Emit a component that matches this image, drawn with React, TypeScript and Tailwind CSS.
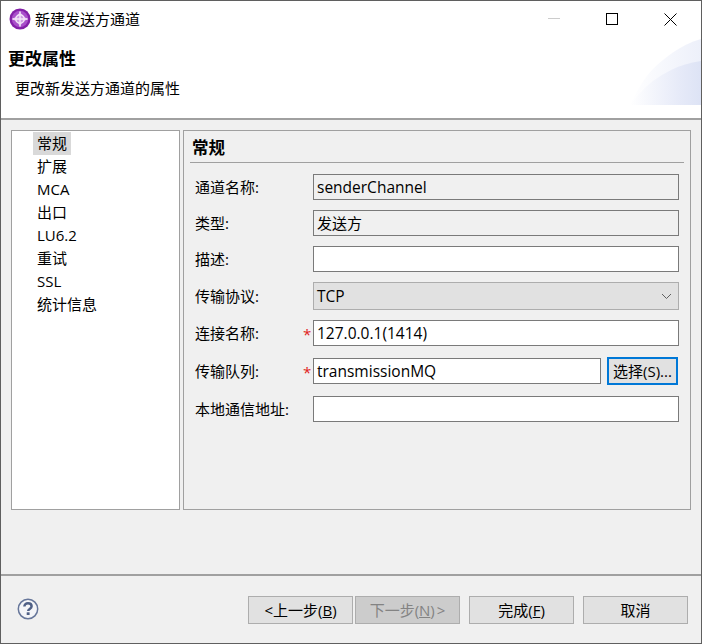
const FONT = "font-['Open_Sans','Noto_Sans_CJK_SC',sans-serif]";

function Field({ label, value, star, gray, latin, mt = "mt-[10px]", children }: { label: string; value?: string; star?: boolean; gray?: boolean; latin?: boolean; mt?: string; children?: React.ReactNode }) {
  return (
    <div className={`flex items-center ${mt}`}>
      <div className="w-[113px] pl-[5px] text-[15px] leading-[20px] flex-none">{label}</div>
      <div className="w-[10px] flex-none text-[#e02020] text-[15px] leading-[20px] pt-[2px]">{star ? "*" : ""}</div>
      {children ?? (
        <div className={`w-[366px] h-[26px] border border-[#7a7a7a] px-[3px] leading-[24px] ${latin ? "text-[15.5px]" : "text-[15px]"} ${gray ? "bg-[#f0f0f0]" : "bg-white"}`}>{value}</div>
      )}
    </div>
  );
}

function WizardButton({ children, disabled, className = "" }: { children: React.ReactNode; disabled?: boolean; className?: string }) {
  return (
    <div className={`w-[105px] h-[28px] flex items-center justify-center border border-[#adadad] text-[15px] leading-[20px] ${disabled ? "bg-[#cccccc] text-[#838383]" : "bg-[#e1e1e1] text-black"} ${className}`}>
      {children}
    </div>
  );
}

const NAV = ["常规", "扩展", "MCA", "出口", "LU6.2", "重试", "SSL", "统计信息"];

export default function App() {
  return (
    <div className={`w-[702px] h-[644px] flex flex-col border border-[#5f5f5f] bg-[#f0f0f0] text-black overflow-hidden ${FONT}`}>
      <div className="h-[117px] flex-none bg-white relative border-b-2 border-[#a0a0a0] box-content">
        <div className="flex items-center h-[36px] pl-[8px]">
          <svg width="22" height="22" viewBox="0 0 22 22" className="flex-none">
            <circle cx="11" cy="11" r="10.5" fill="#8420a8" />
            <circle cx="11" cy="11" r="8.2" fill="#a94fca" />
            <path d="M11 3C12.6 6.8 15.2 9.4 19 11C15.2 12.6 12.6 15.2 11 19C9.4 15.2 6.8 12.6 3 11C6.8 9.4 9.4 6.8 11 3Z" fill="#cf9de3" />
            <path d="M11 3.5v15M3.5 11h15" stroke="#f3e6f8" strokeWidth="1.4" />
            <circle cx="11" cy="11" r="4.2" fill="none" stroke="#f3e6f8" strokeWidth="1.4" />
          </svg>
          <span className="ml-[4px] text-[15px] leading-[20px]">新建发送方通道</span>
        </div>
        <svg width="12" height="1" className="absolute left-[547px] top-[17px]"><rect width="12" height="1" fill="#cccccc" /></svg>
        <svg width="12" height="12" className="absolute left-[605px] top-[12px]"><rect x="0.5" y="0.5" width="11" height="11" fill="none" stroke="#000" /></svg>
        <svg width="13" height="13" className="absolute left-[663px] top-[12px]"><path d="M0.5 0.5L12.5 12.5M12.5 0.5L0.5 12.5" stroke="#000" /></svg>
        <svg width="71" height="68" viewBox="0 0 71 68" className="absolute right-0 top-[36px]">
          <defs>
            <linearGradient id="a" x1="0" x2="1"><stop offset="0" stopColor="#ffffff" /><stop offset="1" stopColor="#edf0fa" /></linearGradient>
            <linearGradient id="b" x1="0" x2="1"><stop offset="0" stopColor="#ffffff" /><stop offset="0.7" stopColor="#e6eaf8" /><stop offset="1" stopColor="#dde3f5" /></linearGradient>
          </defs>
          <path d="M0 68C8 52 14 41 23 32C33 22 50 8 71 2V68Z" fill="url(#a)" />
          <path d="M0 68C8 58 14 51 23 44C33 37 48 27 71 24V68Z" fill="url(#b)" />
        </svg>
        <div className="pl-[7px] mt-[10px] text-[17px] leading-[24px] font-bold">更改属性</div>
        <div className="pl-[14px] mt-[7px] text-[15px] leading-[20px]">更改新发送方通道的属性</div>
      </div>

      <div className="flex h-[380px] flex-none mt-[10px] pl-[10px]">
        <div className="w-[169px] flex-none border border-[#a0a0a0] bg-white pt-[1px] pl-[21px]">
          {NAV.map((n, i) => (
            <div key={n} className="h-[23px] text-[15px] leading-[23px] flex">
              <span className={`px-[4px] ${i === 0 ? "bg-[#d9d9d9] w-[38px]" : ""}`}>{n}</span>
            </div>
          ))}
        </div>
        <div className="w-[508px] flex-none ml-[3px] border border-[#a0a0a0] px-[6px]">
          <div className="h-[32px] border-b border-[#a0a0a0] pl-[2px] text-[16.5px] leading-[33px] font-bold">常规</div>
          <Field label="通道名称:" value="senderChannel" gray latin mt="mt-[11px]" />
          <Field label="类型:" value="发送方" gray />
          <Field label="描述:" value="" />
          <Field label="传输协议:">
            <div className="w-[366px] h-[28px] border border-[#adadad] bg-[#e1e1e1] px-[3px] flex items-center justify-between text-[15.5px]">
              <span className="pt-[1px]">TCP</span>
              <svg width="11" height="7" viewBox="0 0 11 7" className="mr-[3px]"><path d="M1 1l4.5 4.5L10 1" fill="none" stroke="#606060" /></svg>
            </div>
          </Field>
          <Field label="连接名称:" value="127.0.0.1(1414)" star latin />
          <Field label="传输队列:" star mt="mt-[11px]">
            <div className="flex items-center">
              <div className="w-[288px] h-[26px] bg-white border border-[#7a7a7a] px-[3px] text-[15.5px] leading-[24px]">transmissionMQ</div>
              <div className="ml-[6px] w-[71px] h-[28px] border-2 border-[#0078d7] bg-[#e1e1e1] flex items-center justify-center text-[15px] whitespace-nowrap">选择(S)...</div>
            </div>
          </Field>
          <Field label="本地通信地址:" value="" mt="mt-[11px]" />
        </div>
      </div>

      <div className="mt-[64px] h-[68px] flex-none border-t-2 border-[#a0a0a0] flex items-start pt-[20px] pl-[16px] pr-[13px]">
        <svg width="22" height="22" viewBox="0 0 22 22" className="flex-none mt-[2px]">
          <circle cx="11" cy="11" r="9.7" fill="#f4f5f8" stroke="#66769a" strokeWidth="1.5" />
          <path d="M7.4 8.6C7.4 6.4 9 5.2 11 5.2s3.6 1.2 3.6 3.1c0 2.6-3.4 2.6-3.4 4.6" fill="none" stroke="#4f6086" strokeWidth="2.5" />
          <rect x="9.7" y="14.3" width="2.9" height="2.7" fill="#4f6086" />
        </svg>
        <div className="flex ml-auto">
          <WizardButton>&lt;上一步(<u>B</u>)</WizardButton>
          <WizardButton disabled className="ml-[2px]">下一步(<u>N</u>)<span className="ml-[2px]">&gt;</span></WizardButton>
          <WizardButton className="ml-[9px]">完成(<u>F</u>)</WizardButton>
          <WizardButton className="ml-[9px]">取消</WizardButton>
        </div>
      </div>
    </div>
  );
}
